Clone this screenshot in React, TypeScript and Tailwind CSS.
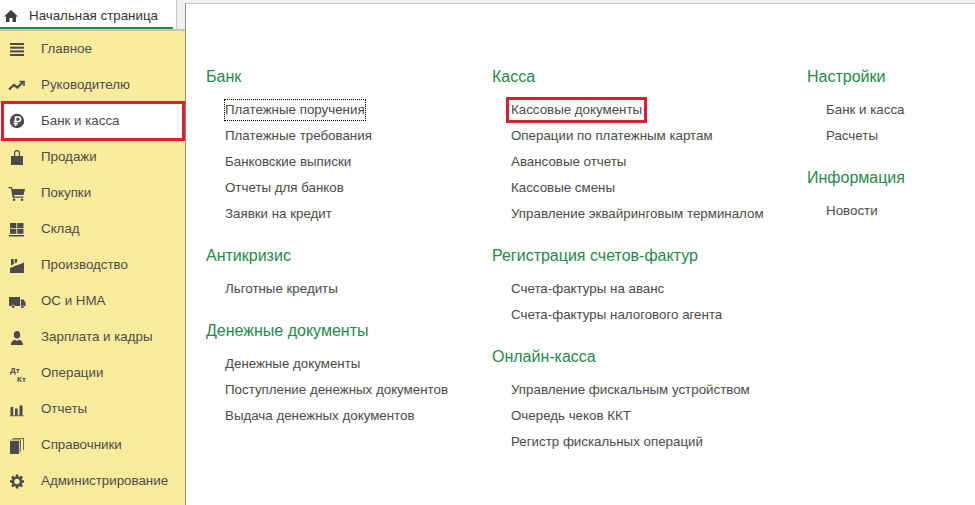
const sans = "font-['Liberation_Sans',Arial,sans-serif]";

type IconProps = { className?: string };

const iconClass = 'w-[18px] h-[18px] text-[#4b4b4b]';

function HomeIcon({ className }: IconProps) {
  return (
    <svg viewBox="0 0 14 14" className={className} fill="currentColor">
      <path d="M7 1 L14 7.5 L12 7.5 L12 13 L8.5 13 L8.5 9 L5.5 9 L5.5 13 L2 13 L2 7.5 L0 7.5 Z" />
    </svg>
  );
}

function MainIcon() {
  return (
    <svg viewBox="0 0 18 18" className={iconClass} fill="currentColor">
      <rect x="2" y="3" width="14" height="2" />
      <rect x="2" y="6.7" width="14" height="2" />
      <rect x="2" y="10.4" width="14" height="2" />
      <rect x="2" y="14" width="14" height="2" />
    </svg>
  );
}

function TrendIcon() {
  return (
    <svg viewBox="0 0 18 18" className={iconClass} fill="none" stroke="currentColor" strokeWidth="2.2">
      <path d="M1 13.5 L6 9 L9.5 11.5 L15 6" />
      <path d="M11.5 5.5 H16 V10" strokeWidth="1.6" />
    </svg>
  );
}

function RubleIcon() {
  return (
    <svg viewBox="0 0 18 18" className={iconClass}>
      <circle cx="9" cy="9" r="7.2" fill="currentColor" />
      <path d="M7.6 14 V5 H10.2 A2.3 2.3 0 0 1 10.2 9.6 H5.6 M5.6 11.7 H10" fill="none" stroke="#fff" strokeWidth="1.5" />
    </svg>
  );
}

function BagIcon() {
  return (
    <svg viewBox="0 0 18 18" className={iconClass} fill="currentColor">
      <path d="M3 8 H6 V5 A3 3 0 0 1 12 5 V8 H15 V17 H3 Z M7.2 8 H10.8 V5 A1.8 1.8 0 0 0 7.2 5 Z" fillRule="evenodd" />
    </svg>
  );
}

function CartIcon() {
  return (
    <svg viewBox="0 0 18 18" className={iconClass} fill="currentColor">
      <path d="M0.5 3 H4 L4.5 5 H17 L15.5 11 H6 L6.2 12.5 H15.5 V13.8 H4.6 L3 4.2 H0.5 Z" />
      <circle cx="6" cy="15.8" r="1.3" />
      <circle cx="14" cy="15.8" r="1.3" />
    </svg>
  );
}

function StockIcon() {
  return (
    <svg viewBox="0 0 18 18" className={iconClass} fill="currentColor">
      <rect x="2" y="3" width="6.3" height="5" />
      <rect x="9.2" y="3" width="6.3" height="5" />
      <rect x="2" y="8.8" width="6.3" height="5" />
      <rect x="9.2" y="8.8" width="6.3" height="5" />
      <rect x="1" y="15" width="15" height="1.5" />
    </svg>
  );
}

function FactoryIcon() {
  return (
    <svg viewBox="0 0 18 18" className={iconClass} fill="currentColor">
      <path d="M3 3 H5.6 L6 8 L3 9.5 Z" />
      <path d="M6.8 3 H9.2 L9 6.2 L6.8 7.4 Z" />
      <path d="M2 12 L16 6.5 V17 H2 Z" />
    </svg>
  );
}

function TruckIcon() {
  return (
    <svg viewBox="0 0 18 18" className={iconClass} fill="currentColor">
      <path d="M1 5 H12 V14 H7 A2 2 0 0 0 3.4 14 H1 Z" />
      <path d="M12.8 7.5 H15.5 L17.5 10.5 V14 H16 A2 2 0 0 0 12.8 14 Z" />
      <circle cx="5.2" cy="14.8" r="1.4" />
      <circle cx="14.4" cy="14.8" r="1.4" />
    </svg>
  );
}

function PersonIcon() {
  return (
    <svg viewBox="0 0 18 18" className={iconClass} fill="currentColor">
      <ellipse cx="9" cy="6.8" rx="3.2" ry="3.8" />
      <path d="M3 17 C3 13.5 5 12.5 7 11.8 L9 13 L11 11.8 C13 12.5 15 13.5 15 17 Z" />
    </svg>
  );
}

function DtKtIcon() {
  return (
    <span className="relative block w-[18px] h-[18px] font-bold text-[8px] leading-[8px] text-[#4b4b4b]">
      <span className="absolute left-[2px] top-[3px]">Дт</span>
      <span className="absolute left-[9px] top-[12px]">Кт</span>
    </span>
  );
}

function BarsIcon() {
  return (
    <svg viewBox="0 0 18 18" className={iconClass} fill="currentColor">
      <rect x="2.5" y="7" width="2.7" height="8" />
      <rect x="7" y="8.5" width="2.7" height="6.5" />
      <rect x="11.5" y="5.5" width="3" height="9.5" />
      <rect x="2" y="15.2" width="13.5" height="1" />
    </svg>
  );
}

function BooksIcon() {
  return (
    <svg viewBox="0 0 18 18" className={iconClass} fill="currentColor">
      <rect x="2" y="5" width="9.2" height="13" />
      <path d="M3.5 3.5 H13 V15.5 H12.2 V4.3 H3.5 Z" />
      <path d="M5 2 H16 V14 H15.2 V2.8 H5 Z" />
    </svg>
  );
}

function GearIcon() {
  return (
    <svg viewBox="0 0 18 18" className={iconClass}>
      <circle cx="9" cy="9.5" r="4" fill="none" stroke="currentColor" strokeWidth="2.6" />
      <path
        d="M9 2.5 V5 M9 14 V16.5 M2 9.5 H4.5 M13.5 9.5 H16 M4 4.5 L5.8 6.3 M12.2 12.7 L14 14.5 M4 14.5 L5.8 12.7 M12.2 6.3 L14 4.5"
        stroke="currentColor"
        strokeWidth="2.6"
      />
    </svg>
  );
}

const menu = [
  { label: 'Главное', icon: <MainIcon /> },
  { label: 'Руководителю', icon: <TrendIcon /> },
  { label: 'Банк и касса', icon: <RubleIcon />, active: true },
  { label: 'Продажи', icon: <BagIcon /> },
  { label: 'Покупки', icon: <CartIcon /> },
  { label: 'Склад', icon: <StockIcon /> },
  { label: 'Производство', icon: <FactoryIcon /> },
  { label: 'ОС и НМА', icon: <TruckIcon /> },
  { label: 'Зарплата и кадры', icon: <PersonIcon /> },
  { label: 'Операции', icon: <DtKtIcon /> },
  { label: 'Отчеты', icon: <BarsIcon /> },
  { label: 'Справочники', icon: <BooksIcon /> },
  { label: 'Администрирование', icon: <GearIcon /> },
];

type Section = { title: string; items: string[] };

const columns: { width: string; sections: Section[] }[] = [
  {
    width: 'w-[286px]',
    sections: [
      { title: 'Банк', items: ['Платежные поручения', 'Платежные требования', 'Банковские выписки', 'Отчеты для банков', 'Заявки на кредит'] },
      { title: 'Антикризис', items: ['Льготные кредиты'] },
      { title: 'Денежные документы', items: ['Денежные документы', 'Поступление денежных документов', 'Выдача денежных документов'] },
    ],
  },
  {
    width: 'w-[315px]',
    sections: [
      { title: 'Касса', items: ['Кассовые документы', 'Операции по платежным картам', 'Авансовые отчеты', 'Кассовые смены', 'Управление эквайринговым терминалом'] },
      { title: 'Регистрация счетов-фактур', items: ['Счета-фактуры на аванс', 'Счета-фактуры налогового агента'] },
      { title: 'Онлайн-касса', items: ['Управление фискальным устройством', 'Очередь чеков ККТ', 'Регистр фискальных операций'] },
    ],
  },
  {
    width: 'w-[160px]',
    sections: [
      { title: 'Настройки', items: ['Банк и касса', 'Расчеты'] },
      { title: 'Информация', items: ['Новости'] },
    ],
  },
];

function Link({ text }: { text: string }) {
  if (text === 'Платежные поручения') {
    return (
      <div className="relative h-[26px] flex items-center pl-[19px]">
        <span>{text}</span>
        <span className="absolute left-[18px] top-[2px] w-[142px] h-[22px] border border-dotted border-black" />
      </div>
    );
  }
  if (text === 'Кассовые документы') {
    return (
      <div className="relative h-[26px] flex items-center pl-[19px]">
        <span>{text}</span>
        <span className="absolute left-[14px] top-0 w-[141px] h-[26px] border-[3px] border-[#d9202c]" />
      </div>
    );
  }
  return (
    <div className="h-[26px] flex items-center pl-[19px]">
      <span>{text}</span>
    </div>
  );
}

export default function App() {
  return (
    <div className={`w-[975px] h-[505px] overflow-hidden bg-[#f0f0f0] flex text-[13.33px] text-[#4b4b4b] ${sans}`}>
      {/* Sidebar */}
      <div className="w-[185px] shrink-0 flex flex-col">
        <div className="h-[31px] shrink-0 flex border-b-2 border-[#c4c4b8]">
          <div className="w-[177px] bg-white border-r border-[#c8c8c8] pt-[6px] pl-[4px]">
            <div className="flex items-center h-[20px] text-[#333]">
              <HomeIcon className="w-[14px] h-[14px] text-[#3f3f3f] mr-[11px]" />
              <span>Начальная страница</span>
            </div>
            <div className="h-[2px] w-[173px] -ml-[4px] mt-px bg-[#1f8a4c]" />
          </div>
        </div>
        <div className="flex-1 bg-[#fbeb9c]">
          {menu.map((m) => (
            <div
              key={m.label}
              className={`relative h-[36px] flex items-center pl-[8px] ${m.active ? 'bg-white' : ''}`}
            >
              <span className="w-[33px] shrink-0 flex">{m.icon}</span>
              <span>{m.label}</span>
              {m.active && (
                <span className="absolute left-[1px] -top-[2px] w-[184px] h-[40px] border-[3px] border-[#d9202c]" />
              )}
            </div>
          ))}
        </div>
      </div>

      {/* Content */}
      <div className="flex-1 mt-[3px] bg-white border-t border-l border-t-[#c8c8c8] border-l-[#8f8f7f] flex pt-[61px] pl-[20px]">
        {columns.map((col, i) => (
          <div key={i} className={`${col.width} shrink-0 flex flex-col gap-[17px]`}>
            {col.sections.map((s) => (
              <div key={s.title}>
                <div className="h-[24px] leading-[24px] text-[16px] text-[#1f8a4c] mb-[8px]">{s.title}</div>
                {s.items.map((t) => (
                  <Link key={t} text={t} />
                ))}
              </div>
            ))}
          </div>
        ))}
      </div>
    </div>
  );
}
